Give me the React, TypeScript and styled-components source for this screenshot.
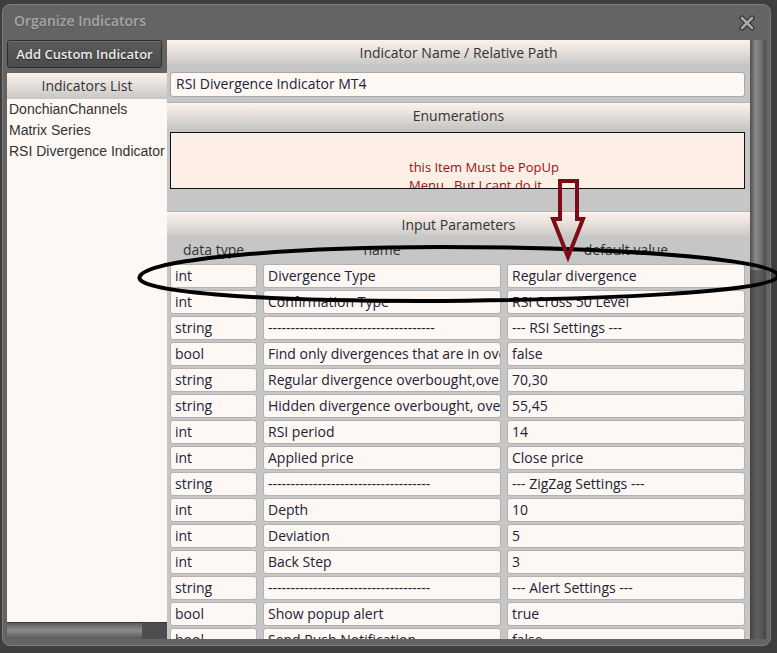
import styled, { createGlobalStyle } from "styled-components";

const GlobalStyle = createGlobalStyle`
  html, body {
    margin: 0;
    padding: 0;
    background: #3e3e3e;
    overflow: hidden;
  }
  * {
    box-sizing: border-box;
  }
`;

const Page = styled.div`
  position: relative;
  width: 777px;
  height: 653px;
  padding: 4px 0 0 2px;
  font-family: "Open Sans", "Noto Sans", sans-serif;
`;

const Window = styled.div`
  width: 769px;
  height: 642px;
  background: #646464;
  border: 1px solid #7e7e7e;
  border-radius: 8px;
  display: flex;
  flex-direction: column;
  overflow: hidden;
`;

const TitleBar = styled.div`
  height: 35px;
  flex: none;
  display: flex;
  align-items: center;
  justify-content: space-between;
  padding: 0 15px 5px 11px;
`;

const Title = styled.span`
  font-size: 14px;
  font-weight: 600;
  color: #a6a6a6;
  text-shadow: 0 1px 0 #555;
`;

const CloseBox = styled.span`
  display: flex;
  margin-top: 5px;
`;

const Body = styled.div`
  flex: 1;
  min-height: 0;
  display: flex;
  padding: 0 4px 6px 4px;
`;

const LeftCol = styled.div`
  width: 160px;
  display: flex;
  flex-direction: column;
  gap: 5px;
`;

const AddButton = styled.button`
  height: 28px;
  width: 155px;
  flex: none;
  margin: 0;
  padding: 0;
  border: 1px solid #2e2e2e;
  border-radius: 3px;
  background: linear-gradient(#5a5a5a, #4c4c4c);
  box-shadow: inset 0 1px 0 #6c6c6c;
  color: #ececec;
  font-family: "Open Sans", sans-serif;
  font-size: 13px;
  font-weight: 600;
  text-shadow: 0 1px 1px #222;
`;

const ListPanel = styled.div`
  flex: 1;
  min-height: 0;
  display: flex;
  flex-direction: column;
  background: #fdf8f4;
`;

const PanelHeader = styled.div<{ $top?: boolean }>`
  height: ${({ $top }) => ($top ? "27px" : "26px")};
  flex: none;
  line-height: 26px;
  text-align: center;
  font-size: 14px;
  color: #333;
  background: linear-gradient(#fdf1eb 0%, #ece4df 35%, #c6c6c6 100%);
  border-top: ${({ $top }) => ($top ? "1px solid #b3b3b3" : "none")};
`;

const List = styled.div`
  flex: 1;
  padding: 0 2px;
`;

const ListItem = styled.div`
  font-family: "Liberation Sans", Arial, sans-serif;
  font-size: 14px;
  line-height: 21px;
  color: #333;
  white-space: nowrap;
  overflow: hidden;
`;

const HScroll = styled.div`
  height: 17px;
  flex: none;
  display: flex;
  border-top: 1px solid #3a3a3a;
  background: #4e4e4e;
`;

const HThumb = styled.div`
  width: 135px;
  background: linear-gradient(#5c5c5c, #8c8c8c 45%, #6a6a6a 80%, #5a5a5a);
`;

const RightArea = styled.div`
  flex: 1;
  display: flex;
  min-width: 0;
`;

const Content = styled.div`
  flex: 1;
  min-width: 0;
  background: #c6c6c6;
  overflow: hidden;
  display: flex;
  flex-direction: column;
`;

const NameInput = styled.div`
  height: 25px;
  flex: none;
  margin: 6px 5px 5px 3px;
  padding: 0 5px;
  line-height: 22px;
  background: #fdf8f4;
  border: 1px solid #a8a8a8;
  border-radius: 3px;
  font-size: 14px;
  color: #222236;
`;

const EnumBox = styled.div`
  height: 57px;
  flex: none;
  margin: 3px 5px 22px 3px;
  padding: 25px 0 0 238px;
  background: #fdeee6;
  border: 1px solid #111;
  overflow: hidden;
  color: #9c1212;
  font-size: 13px;
  line-height: 18px;
`;

const ParamGrid = styled.div`
  flex: none;
  display: grid;
  grid-template-columns: 87px 238px 1fr;
  column-gap: 6px;
  row-gap: 2px;
  padding: 0 5px 0 3px;
`;

const ColLabel = styled.div`
  height: 24px;
  line-height: 24px;
  text-align: center;
  font-size: 14px;
  color: #333;
`;

const Cell = styled.div`
  height: 24px;
  padding: 0 4px;
  line-height: 22px;
  background: #fdf8f4;
  border: 1px solid #b2b2b2;
  border-radius: 3px;
  font-size: 14px;
  color: #222236;
  white-space: nowrap;
  overflow: hidden;
`;

const VScroll = styled.div`
  width: 16px;
  flex: none;
  display: flex;
  flex-direction: column;
  background: linear-gradient(to right, #434343, #5e5e5e 40%, #565656 75%, #444);
`;

const VThumb = styled.div`
  height: 230px;
  background: linear-gradient(to right, #4e4e4e, #8a8a8a 35%, #707070 70%, #4a4a4a);
`;

const Overlay = styled.svg`
  position: absolute;
  left: 0;
  top: 0;
  pointer-events: none;
`;

const params: [string, string, string][] = [
  ["int", "Divergence Type", "Regular divergence"],
  ["int", "Confirmation Type", "RSI Cross 50 Level"],
  ["string", "-------------------------------------", "--- RSI Settings ---"],
  ["bool", "Find only divergences that are in overbought/oversold zones", "false"],
  ["string", "Regular divergence overbought,oversold levels", "70,30"],
  ["string", "Hidden divergence overbought, oversold levels", "55,45"],
  ["int", "RSI period", "14"],
  ["int", "Applied price", "Close price"],
  ["string", "------------------------------------", "--- ZigZag Settings ---"],
  ["int", "Depth", "10"],
  ["int", "Deviation", "5"],
  ["int", "Back Step", "3"],
  ["string", "------------------------------------", "--- Alert Settings ---"],
  ["bool", "Show popup alert", "true"],
  ["bool", "Send Push Notification", "false"],
];

function CloseIcon() {
  return (
    <svg width="16" height="16" viewBox="0 0 16 16">
      <path d="M3 3 L13 13 M13 3 L3 13" stroke="#333" strokeWidth="5" strokeLinecap="round" />
      <path d="M3 3 L13 13 M13 3 L3 13" stroke="#a9a9a9" strokeWidth="2.6" strokeLinecap="round" />
    </svg>
  );
}

export default function App() {
  return (
    <Page>
      <GlobalStyle />
      <Window>
        <TitleBar>
          <Title>Organize Indicators</Title>
          <CloseBox>
            <CloseIcon />
          </CloseBox>
        </TitleBar>
        <Body>
          <LeftCol>
            <AddButton>Add Custom Indicator</AddButton>
            <ListPanel>
              <PanelHeader>Indicators List</PanelHeader>
              <List>
                <ListItem>DonchianChannels</ListItem>
                <ListItem>Matrix Series</ListItem>
                <ListItem>RSI Divergence Indicator MT4</ListItem>
              </List>
              <HScroll>
                <HThumb />
              </HScroll>
            </ListPanel>
          </LeftCol>
          <RightArea>
            <Content>
              <PanelHeader>Indicator Name / Relative Path</PanelHeader>
              <NameInput>RSI Divergence Indicator MT4</NameInput>
              <PanelHeader $top>Enumerations</PanelHeader>
              <EnumBox>
                this Item Must be PopUp
                <br />
                Menu , But I cant do it
              </EnumBox>
              <PanelHeader $top>Input Parameters</PanelHeader>
              <ParamGrid>
                <ColLabel>data type</ColLabel>
                <ColLabel>name</ColLabel>
                <ColLabel>default value</ColLabel>
                {params.map(([type, name, value], i) => [
                  <Cell key={"t" + i}>{type}</Cell>,
                  <Cell key={"n" + i}>{name}</Cell>,
                  <Cell key={"v" + i}>{value}</Cell>,
                ])}
              </ParamGrid>
            </Content>
            <VScroll>
              <VThumb />
            </VScroll>
          </RightArea>
        </Body>
      </Window>
      <Overlay width="777" height="653" viewBox="0 0 777 653">
        <path
          d="M140,276 C150,258 300,247 440,247 C600,247 778,258 778,276 C778,292 600,300 420,301 C260,301 130,292 140,276 Z"
          fill="none"
          stroke="#000"
          strokeWidth="4"
        />
        <path
          d="M560,181 L577,181 L577,219 L583,219 L568,257 L553,219 L560,219 Z"
          fill="none"
          stroke="#7f0a18"
          strokeWidth="4"
          strokeLinejoin="miter"
        />
      </Overlay>
    </Page>
  );
}
